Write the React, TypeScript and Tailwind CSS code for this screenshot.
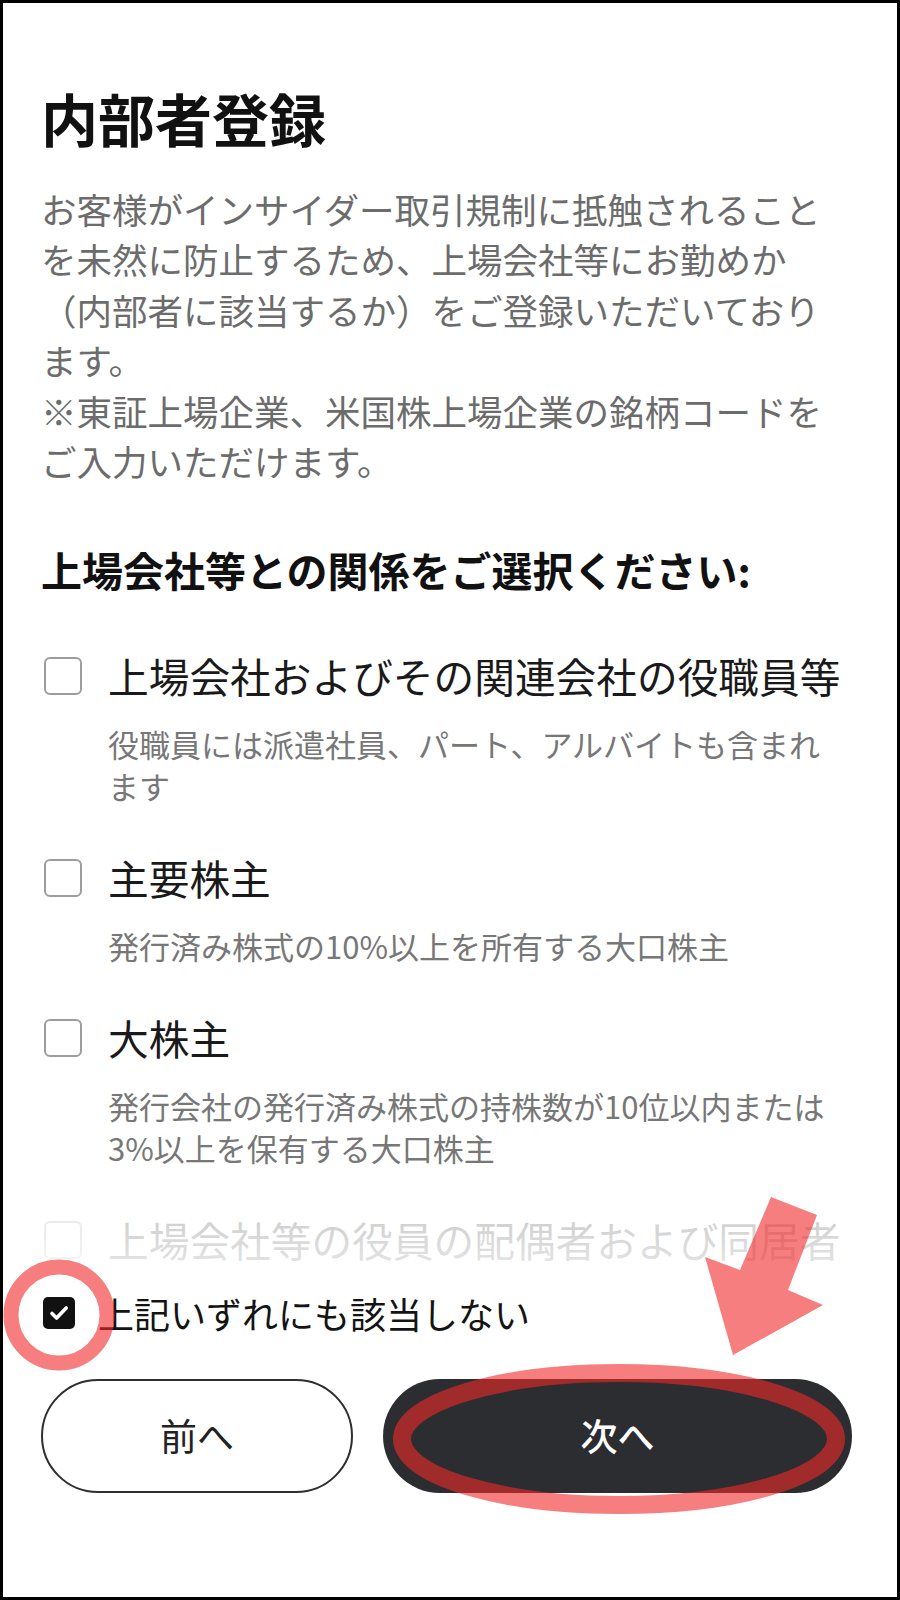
import React from "react";

type Item = { label: string; desc: string[] };

const items: Item[] = [
  {
    label: "上場会社およびその関連会社の役職員等",
    desc: ["役職員には派遣社員、パート、アルバイトも含まれ", "ます"],
  },
  { label: "主要株主", desc: ["発行済み株式の10%以上を所有する大口株主"] },
  {
    label: "大株主",
    desc: ["発行会社の発行済み株式の持株数が10位以内または", "3%以上を保有する大口株主"],
  },
  { label: "上場会社等の役員の配偶者および同居者", desc: [] },
];

function Option({ item }: { item: Item }) {
  return (
    <div className="flex gap-[26px]">
      <div className="h-[56px] flex items-center shrink-0 ml-[3px]">
        <div className="w-[38px] h-[38px] rounded-[6px] border-2 border-[#9d9d9d] bg-white" />
      </div>
      <div className="min-w-0">
        <div className="text-[40.7px] leading-[56px] text-[#1a1a1a] whitespace-nowrap">{item.label}</div>
        {item.desc.length > 0 && (
          <div className="mt-[19px] text-[31px] leading-[42px] text-[#777777]">
            {item.desc.map((d, i) => (
              <div key={i} className="whitespace-nowrap">
                {d}
              </div>
            ))}
          </div>
        )}
      </div>
    </div>
  );
}

export default function App() {
  return (
    <div className="relative w-[900px] h-[1600px] bg-white font-['Noto_Sans_CJK_JP','Noto_Sans',sans-serif]">
      <div className="w-full h-full border-[3px] border-black flex flex-col bg-white">
        {/* scrollable content */}
        <div className="relative flex-1 min-h-0 overflow-hidden pl-[38px] pr-[45px] pt-[81px]">
          <h1 className="text-[57px] leading-[67px] font-bold text-[#111111]">内部者登録</h1>
          <p className="mt-[33px] text-[35.5px] leading-[50.4px] text-[#6c6c6c]">
            <span className="block whitespace-nowrap">お客様がインサイダー取引規制に抵触されること</span>
            <span className="block whitespace-nowrap">を未然に防止するため、上場会社等にお勤めか</span>
            <span className="block whitespace-nowrap">（内部者に該当するか）をご登録いただいており</span>
            <span className="block whitespace-nowrap">ます。</span>
            <span className="block whitespace-nowrap">※東証上場企業、米国株上場企業の銘柄コードを</span>
            <span className="block whitespace-nowrap">ご入力いただけます。</span>
          </p>
          <h2 className="mt-[55px] text-[41px] leading-[56px] font-bold text-[#111111] whitespace-nowrap">
            上場会社等との関係をご選択ください:
          </h2>
          <div className="mt-[51px] flex flex-col gap-[43px]">
            {items.map((it, i) => (
              <Option key={i} item={it} />
            ))}
          </div>
          <div className="absolute left-0 right-0 bottom-0 h-[105px] bg-linear-to-b from-white/0 via-white/80 to-white/90" />
        </div>

        {/* footer */}
        <div className="shrink-0 bg-white pl-[38px] pr-[45px] pt-[10px] pb-[104px]">
          <div className="flex items-center gap-[23px] h-[56px]">
            <div className="ml-[2px] w-[32px] h-[32px] rounded-[5px] bg-[#111111] flex items-center justify-center shrink-0">
              <svg width="32" height="32" viewBox="0 0 32 32">
                <path
                  d="M9 16.5l4.6 4.6L23.2 11"
                  fill="none"
                  stroke="white"
                  strokeWidth="3.6"
                  strokeLinecap="round"
                  strokeLinejoin="round"
                />
              </svg>
            </div>
            <span className="text-[36px] leading-[56px] text-[#141414] whitespace-nowrap">上記いずれにも該当しない</span>
          </div>
          <div className="mt-[38px] flex gap-[30px]">
            <button className="w-[312px] h-[114px] rounded-full border-2 border-[#2e2e2e] bg-white text-[37px] text-[#222222] flex items-center justify-center">
              前へ
            </button>
            <button className="flex-1 h-[114px] rounded-full bg-[#2b2d31] text-[37px] font-medium text-white flex items-center justify-center">
              次へ
            </button>
          </div>
        </div>
      </div>

      {/* annotation overlay */}
      <svg
        className="absolute left-0 top-0 pointer-events-none"
        width="900"
        height="1600"
        viewBox="0 0 900 1600"
      >
        <circle cx="59" cy="1315" r="48" fill="none" stroke="rgba(240,40,40,0.6)" strokeWidth="15" />
        <ellipse cx="619" cy="1439" rx="217" ry="66" fill="none" stroke="rgba(240,40,40,0.6)" strokeWidth="18" />
        <polygon
          points="771,1197 817,1215 788,1290 823,1305 733,1355 705,1257 740,1270"
          fill="rgba(240,40,40,0.6)"
        />
      </svg>
    </div>
  );
}
